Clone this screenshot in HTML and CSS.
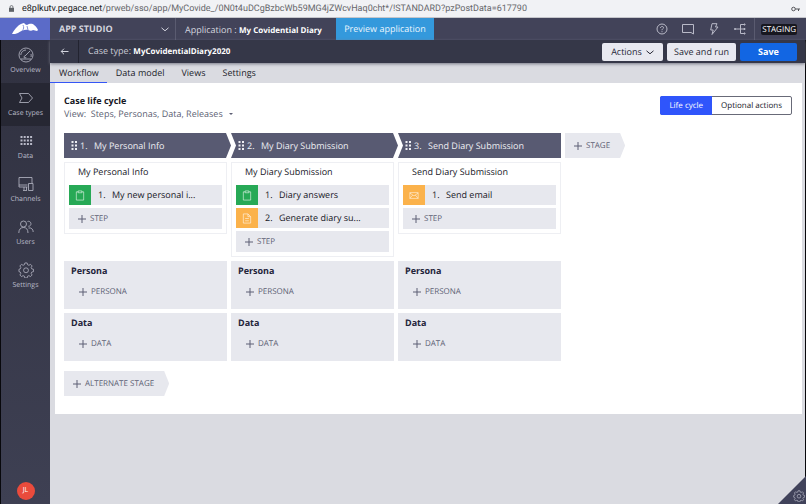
FILE: index.html
```html
<!DOCTYPE html>
<html lang="en">
<head>
<meta charset="utf-8">
<title>App Studio - MyCovidentialDiary2020</title>
<link rel="stylesheet" href="styles.css">
</head>
<body>
<svg class="defs" aria-hidden="true">
  <symbol id="plus" viewBox="0 0 8 8"><path d="M4 0v8M0 4h8"/></symbol>
  <symbol id="chevron" viewBox="0 0 8 5"><path d="M.5 .8 4 3.8 7.500 .8"/></symbol>
  <symbol id="clipboard" viewBox="0 0 10 12"><path d="M3 2H1v9h8V2H7M3 1h4v2H3z"/></symbol>
  <symbol id="doc" viewBox="0 0 10 12"><path d="M1 1h5l3 3v7H1zM6 1v3h3M3 6h4M3 8.500h4"/></symbol>
  <symbol id="mail" viewBox="0 0 12 9"><path d="M1 1h10v7H1zM1 1.500l5 3.500 5-3.500M1 8l3.500-4M11 8 7.500 4"/></symbol>
  <symbol id="grip" viewBox="0 0 6 10"><path d="M0 0h2v2H0zM3.500 0h2v2h-2zM0 3.500h2v2H0zM3.500 3.500h2v2h-2zM0 7h2v2H0zM3.500 7h2v2h-2z"/></symbol>
  <symbol id="gear" viewBox="0 0 16 17"><path d="M6.800 1h2.400l.5 1.900 1.400.6 1.700-1 1.700 1.700-1 1.700.6 1.400 1.900.5v2.400l-1.900.5-.6 1.400 1 1.700-1.700 1.700-1.700-1-1.400.6-.5 1.900H6.800l-.5-1.900-1.400-.6-1.700 1-1.700-1.700 1-1.700-.6-1.400L.5 10.200V7.800l1.400-.5.6-1.400-1-1.700 1.700-1.700 1.700 1 1.400-.6z"/><circle cx="8" cy="8.800" r="2.600"/></symbol>
</svg>
<div class="address">
  <svg class="lock" viewBox="0 0 6 8"><path d="M0 3.200h6V8H0z"/><path class="shackle" d="M1.300 3.500V2a1.700 1.500 0 0 1 3.400 0v1.500"/></svg>
  <span class="url"><b>e8plkutv.pegace.net</b>/prweb/sso/app/MyCovide_/0N0t4uDCgBzbcWb59MG4jZWcvHaq0cht*/!STANDARD?pzPostData=617790</span>
  <svg class="key" viewBox="0 0 9 6"><circle cx="2.500" cy="3" r="1.800"/><path d="M4.300 3H9M7.500 3v2"/></svg>
</div>
<header class="topbar">
  <a class="logo" href="#" aria-label="Home"><svg viewBox="0 0 26 12"><path d="M0 11C3 5 7 1 12 0c1 1 2 2 3 2 2-1 5-2 7 0 2 1 3 3 4 5l-1 1-4-1c-1 1-3 1-5 0C13 6 9 8 6 10c-2 1-4 1-6 1z"/><path class="wing" d="M11 2c1 2 1 4-1 6M15 3l1 4"/></svg></a>
  <button class="studio" type="button">APP STUDIO<svg class="chev"><use href="#chevron"/></svg></button>
  <p class="application">Application : <strong>My Covidential Diary</strong></p>
  <button class="preview" type="button">Preview application</button>
  <nav class="tools" aria-label="Tools">
    <a href="#" aria-label="Help"><svg viewBox="0 0 12 12"><circle cx="6" cy="6" r="5"/><path d="M4.500 5c0-2 3-2 3-.3C7.500 5.800 6 5.800 6 7.200M6 8.200v1"/></svg></a>
    <a href="#" aria-label="Messages"><svg viewBox="0 0 12 12"><path d="M.5 1.500h11v9.500L9 9.500H.5z"/></svg></a>
    <a href="#" aria-label="Quick actions"><svg viewBox="0 0 12 12"><path d="M4 .7h5L7.500 4H10L4 11.500 5.200 7H2.700z"/></svg></a>
    <a href="#" aria-label="Branches"><svg viewBox="0 0 12 12"><path d="M1 6h9M10 1.500H6.500v9H10"/><path d="M.5 5.500h1v1h-1zM10 1h1v1h-1zM10 5.500h1v1h-1zM10 10h1v1h-1z"/></svg></a>
  </nav>
  <div class="env"><span>STAGING</span></div>
</header>
<div class="shell">
  <nav class="sidebar" aria-label="Main">
    <a href="#"><svg viewBox="0 0 16 16"><circle cx="8" cy="8" r="7"/><path d="M3 12h10M2.800 8A5.200 5.200 0 0 1 8 3M13 7c.3 1 .3 2 0 3M7 9l5-5M7 9a1 1 0 1 0 1 1"/></svg>Overview</a>
    <a class="current" href="#"><svg viewBox="0 0 16 16"><path d="M1.500 3.500h9L14.500 8l-4 4.500h-9L4 8z"/></svg>Case types</a>
    <a href="#"><svg class="dots" viewBox="0 0 16 16"><path d="M2.500 3h2v2h-2zM5.700 3h2v2h-2zM8.900 3h2v2h-2zM12.100 3h2v2h-2zM2.500 6.500h2v2h-2zM5.700 6.500h2v2h-2zM8.900 6.500h2v2h-2zM12.100 6.500h2v2h-2zM2.500 10h2v2h-2zM5.700 10h2v2h-2zM8.900 10h2v2h-2zM12.100 10h2v2h-2z"/></svg>Data</a>
    <a href="#"><svg viewBox="0 0 16 16"><path d="M9.500 11H1V1.500h13V7M1 9h8.500M5 14.500h4M6 11v3M8.500 11v3M10.500 7.500h4.500v7h-4.500z"/></svg>Channels</a>
    <a href="#"><svg viewBox="0 0 16 16"><circle cx="5.500" cy="5" r="3"/><path d="M.8 14c0-3.800 2-5.500 4.700-5.500S10 10.200 10 14M9.500 2.500a2.500 2.500 0 1 1 .8 4.800M10.500 9c2.700-.6 4.700 1.200 4.700 4"/></svg>Users</a>
    <a href="#"><svg><use href="#gear"/></svg>Settings</a>
    <button class="avatar" type="button" aria-label="Profile">JL</button>
  </nav>
  <main class="main">
    <div class="casebar">
      <a class="back" href="#" aria-label="Back"><svg viewBox="0 0 8 7"><path d="M8 3.500H.7M3.500.7.7 3.500l2.800 2.800"/></svg></a>
      <p class="case">Case type: <strong>MyCovidentialDiary2020</strong></p>
      <button class="btn" type="button">Actions<svg class="chev"><use href="#chevron"/></svg></button>
      <button class="btn run" type="button">Save and run</button>
      <button class="btn save" type="button">Save</button>
    </div>
    <nav class="tabs" aria-label="Case type">
      <a class="active" href="#">Workflow</a><a href="#">Data model</a><a href="#">Views</a><a href="#">Settings</a>
    </nav>
    <section class="panel">
      <div class="head">
        <div>
          <h1>Case life cycle</h1>
          <button class="view" type="button">View:&nbsp; Steps, Personas, Data, Releases<i></i></button>
        </div>
        <div class="toggle"><button class="on" type="button">Life cycle</button><button type="button">Optional actions</button></div>
      </div>
      <div class="board">
        <h2 class="stage first"><svg><use href="#grip"/></svg><span>1.</span>My Personal Info</h2>
        <h2 class="stage"><svg><use href="#grip"/></svg><span>2.</span>My Diary Submission</h2>
        <h2 class="stage last"><svg><use href="#grip"/></svg><span>3.</span>Send Diary Submission</h2>
        <button class="addstage" type="button"><svg class="plus"><use href="#plus"/></svg>STAGE</button>

        <section class="process">
          <h3>My Personal Info</h3>
          <a class="step" href="#"><span class="icon green"><svg><use href="#clipboard"/></svg></span><span class="num">1.</span>My new personal i...</a>
          <button class="addstep" type="button"><svg class="plus"><use href="#plus"/></svg>STEP</button>
        </section>
        <section class="process">
          <h3>My Diary Submission</h3>
          <a class="step" href="#"><span class="icon green"><svg><use href="#clipboard"/></svg></span><span class="num">1.</span>Diary answers</a>
          <a class="step" href="#"><span class="icon orange"><svg><use href="#doc"/></svg></span><span class="num">2.</span>Generate diary su...</a>
          <button class="addstep" type="button"><svg class="plus"><use href="#plus"/></svg>STEP</button>
        </section>
        <section class="process">
          <h3>Send Diary Submission</h3>
          <a class="step" href="#"><span class="icon orange"><svg><use href="#mail"/></svg></span><span class="num">1.</span>Send email</a>
          <button class="addstep" type="button"><svg class="plus"><use href="#plus"/></svg>STEP</button>
        </section>

        <section class="extra start"><h3>Persona</h3><button type="button"><svg class="plus"><use href="#plus"/></svg>PERSONA</button></section>
        <section class="extra"><h3>Persona</h3><button type="button"><svg class="plus"><use href="#plus"/></svg>PERSONA</button></section>
        <section class="extra"><h3>Persona</h3><button type="button"><svg class="plus"><use href="#plus"/></svg>PERSONA</button></section>

        <section class="extra start"><h3>Data</h3><button type="button"><svg class="plus"><use href="#plus"/></svg>DATA</button></section>
        <section class="extra"><h3>Data</h3><button type="button"><svg class="plus"><use href="#plus"/></svg>DATA</button></section>
        <section class="extra"><h3>Data</h3><button type="button"><svg class="plus"><use href="#plus"/></svg>DATA</button></section>
      </div>
      <button class="addstage alternate" type="button"><svg class="plus"><use href="#plus"/></svg>ALTERNATE STAGE</button>
    </section>
  </main>
</div>
<button class="corner" type="button" aria-label="Developer tools"><svg><use href="#gear"/></svg></button>
</body>
</html>
```
FILE: styles.css
```css
* { box-sizing: border-box; }

body {
  margin: 0;
  min-height: 100vh;
  display: flex;
  flex-direction: column;
  background: #dadbe1;
  color: #17171f;
  font: 9px/12px "Open Sans", sans-serif;
  text-rendering: geometricPrecision;
}

h1, h2, h3, p { margin: 0; font: inherit; }
a { color: inherit; text-decoration: none; }
button { margin: 0; padding: 0; border: 0; background: none; color: inherit; font: inherit; white-space: nowrap; text-rendering: inherit; }
strong { font-size: 8px; font-weight: 700; color: #fff; }
svg { fill: none; stroke: currentColor; flex: none; }
.defs { position: absolute; width: 0; height: 0; }
.chev { width: 8px; height: 5px; }
.plus { width: 8px; height: 8px; }

/* Address bar */
.address {
  display: flex;
  align-items: center;
  height: 18px;
  padding: 0 6px 0 9px;
  background: #f1f2f5;
  border-bottom: 1px solid #c5c6cb;
  font: 9px/12px Roboto, sans-serif;
  color: #66676b;
}
.address b { font-weight: 400; color: #202124; }
.lock { width: 5px; height: 7px; margin-right: 8px; fill: #5f6368; stroke: none; }
.shackle { fill: none; stroke: #5f6368; }
.key { width: 9px; height: 6px; margin-left: auto; color: #55565a; }

/* Top bar */
.topbar { display: flex; height: 22px; background: #424359; color: #d3d4de; }
.logo { width: 50px; display: flex; align-items: center; justify-content: center; background: #5b6bc8; }
.logo svg { width: 26px; height: 12px; fill: #fff; stroke: none; }
.logo .wing { fill: none; stroke: #8995d8; }
.studio {
  width: 126px;
  padding: 0 6px 0 9px;
  display: flex;
  align-items: center;
  justify-content: space-between;
  border-right: 1px solid #5a5b70;
  font-weight: 700;
}
.application { padding: 0 14px 0 9px; line-height: 23px; white-space: pre; }
.preview { width: 98px; background: #3499dc; color: #e9f5fd; }
.tools { display: flex; align-items: center; gap: 14px; margin-left: auto; padding-right: 8px; color: #b9bac8; }
.tools a, .tools svg { display: block; width: 12px; height: 12px; }
.env { width: 43px; border-left: 1px solid #5a5b70; display: flex; align-items: center; justify-content: flex-end; margin-right: 9px; }
.env span { padding: 0 1px; background: #17171f; border-radius: 2px; color: #fff; font-size: 8px; line-height: 11px; }

/* Sidebar */
.shell { flex: 1; display: flex; border-right: 1px solid #08080c; }
.sidebar {
  width: 50px;
  display: flex;
  flex-direction: column;
  border-left: 1px solid #08080c;
  background: linear-gradient(#303140, #3e4053);
  color: #b9bac8;
  font-size: 7px;
  line-height: 10px;
  text-align: center;
}
.sidebar a { height: 43px; padding-top: 7px; display: flex; flex-direction: column; align-items: center; gap: 3px; }
.sidebar a svg { width: 16px; height: 16px; stroke-width: .8; }
.sidebar .dots { fill: currentColor; stroke: none; }
.sidebar .current { background: #262733; }
.avatar { width: 18px; height: 18px; margin: auto auto 4px; border-radius: 9px; background: #ea4b3c; color: #fff; }

/* Case header and tabs */
.main { flex: 1; min-width: 0; }
.casebar {
  display: flex;
  align-items: center;
  gap: 4px;
  height: 23px;
  padding-right: 8px;
  background: #353748;
  color: #c9cad4;
  box-shadow: 0 1px 3px #777986;
}
.back { width: 29px; height: 23px; display: flex; align-items: center; justify-content: center; border-right: 1px solid #222330; }
.back svg { width: 9px; height: 7px; color: #d3d4de; }
.case { margin: 0 auto 0 5px; }
.btn { height: 18px; min-width: 61px; border-radius: 2px; background: #e8e9f0; color: #292a38; }
.btn .chev { margin-left: 4px; }
.btn.run { min-width: 69px; }
.btn.save { min-width: 57px; background: #1266e3; color: #fff; font-weight: 700; }
.tabs { display: flex; height: 20px; line-height: 20px; color: #1c1d2b; }
.tabs a { padding: 0 8px 0 9px; }
.tabs .active { border-bottom: 1px solid #3556f5; }

/* Panel */
.panel { margin: 0 3px 0 5px; padding: 12px 9px 18px; background: #fff; }
.head { display: flex; justify-content: space-between; }
h1 { font-weight: 700; }
.view { display: flex; align-items: center; height: 12px; margin-top: 1px; color: #5d5f74; }
.view i { margin-left: 6px; border: 2px solid transparent; border-top-color: #5d5f74; border-bottom: 0; }
.toggle { display: flex; height: 19px; margin: 1px 1px 0 0; border: 1px solid #686a78; border-radius: 2px; font-size: 8px; }
.toggle button { padding: 0 9px; }
.toggle .on { margin: -1px 0 -1px -1px; border-radius: 2px 0 0 2px; background: #2f55fb; color: #fff; }

/* Life cycle board */
.board {
  display: grid;
  grid-template-columns: 163px 163px 163px max-content;
  gap: 4px;
  margin-top: 13px;
}
.stage {
  height: 25px;
  margin-right: -4px;
  padding-left: 7px;
  display: flex;
  align-items: center;
  background: #585a72;
  color: #eeeef3;
  clip-path: polygon(0 0, calc(100% - 5px) 0, 100% 50%, calc(100% - 5px) 100%, 0 100%, 5px 50%);
}
.stage.first { clip-path: polygon(0 0, calc(100% - 5px) 0, 100% 50%, calc(100% - 5px) 100%, 0 100%); }
.stage.last { margin-right: 0; clip-path: polygon(0 0, 100% 0, 100% 100%, 0 100%, 5px 50%); }
.stage svg { width: 7px; height: 10px; margin-right: 2px; fill: currentColor; stroke: none; }
.stage span { width: 14px; }
.addstage {
  display: flex;
  align-items: center;
  gap: 4px;
  height: 25px;
  padding: 0 15px 0 9px;
  background: #e7e8ee;
  color: #5d5f74;
  font-size: 8px;
  clip-path: polygon(0 0, calc(100% - 5px) 0, 100% 50%, calc(100% - 5px) 100%, 0 100%);
}
.process {
  grid-row: 2;
  align-self: start;
  display: flex;
  flex-direction: column;
  gap: 3px;
  padding: 0 4px 4px;
  border: 1px solid #eeeff3;
}
.process h3 { padding: 0 0 2px 9px; line-height: 17px; }
.step, .addstep { display: flex; align-items: center; height: 21px; background: #e7e8ee; }
.step { height: 20px; }
.icon { width: 22px; align-self: stretch; display: flex; align-items: center; justify-content: center; color: #fff9; }
.icon svg { width: 10px; height: 11px; }
.green { background: #27a956; }
.orange { background: #fbb24b; }
.num { width: 14px; margin-left: 7px; }
.addstep, .extra button { gap: 4px; color: #5d5f74; font-size: 8px; }
.addstep { padding-left: 9px; }
.extra { height: 48px; padding: 4px 7px; background: #e7e8ee; }
.extra.start { grid-column: 1; }
.extra h3 { font-weight: 700; color: #23243a; }
.extra button { display: flex; align-items: center; margin: 9px 0 0 8px; }
.alternate { margin-top: 10px; }

/* Corner launcher */
.corner {
  position: fixed;
  right: 0;
  bottom: 0;
  width: 28px;
  height: 28px;
  display: flex;
  align-items: flex-end;
  justify-content: flex-end;
  padding: 0 1px 2px 0;
  background: #40425a;
  color: #b5b6c5;
  clip-path: polygon(100% 0, 100% 100%, 0 100%);
}
.corner svg { width: 12px; height: 12px; }
```
